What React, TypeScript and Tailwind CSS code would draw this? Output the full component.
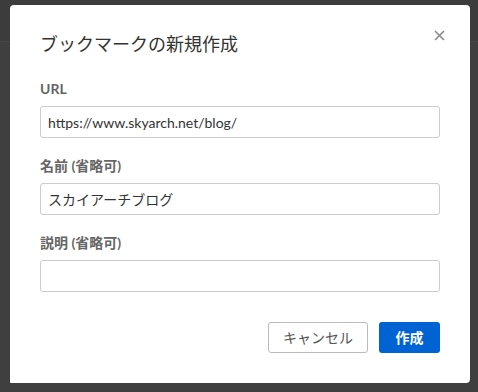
import React from "react";

const font = { fontFamily: '"Lato", "Noto Sans CJK JP", sans-serif' };

function Field({ label, value }: { label: string; value?: string }) {
  return (
    <div className="flex flex-col">
      <label className="text-[14px] leading-[20px] font-bold text-[#666] mb-[7px]">{label}</label>
      <div className="h-[32px] w-[400px] border border-[#ccc] rounded-[3px] px-[7px] flex items-center text-[14px] text-[#333]">
        {value}
      </div>
    </div>
  );
}

export default function App() {
  return (
    <div className="relative w-[478px] h-[392px] bg-[#3f3f3f] overflow-hidden" style={font}>
      {/* page header faintly visible behind the overlay */}
      <div className="absolute left-0 top-0 w-full h-[42px] bg-[#3c3c3c] border-b border-[#474747]" />
      <div className="relative ml-[10px] mt-[5px] w-[460px] h-[378px] bg-white rounded-[4px] rounded-bl-[1px] px-[30px] pt-[26px]">
        <div className="flex items-start justify-between">
          <h2 className="text-[18px] leading-[26px] text-[#333] font-normal">ブックマークの新規作成</h2>
          <svg width="11" height="11" viewBox="0 0 11 11" className="mt-[-1px] mr-[-5px]">
            <path d="M1 1L10 10M10 1L1 10" stroke="#8a8a8a" strokeWidth="1.6" />
          </svg>
        </div>
        <div className="mt-[22px] flex flex-col gap-[18px]">
          <Field label="URL" value="https://www.skyarch.net/blog/" />
          <Field label="名前 (省略可)" value="スカイアーチブログ" />
          <Field label="説明 (省略可)" />
        </div>
        <div className="mt-[30px] flex justify-end gap-[11px]">
          <button className="w-[100px] h-[31px] border border-[#bbb] rounded-[3px] text-[14px] text-[#555] bg-white">
            キャンセル
          </button>
          <button className="w-[61px] h-[31px] rounded-[3px] text-[14px] font-bold text-white bg-[#0063d3]">
            作成
          </button>
        </div>
      </div>
    </div>
  );
}
